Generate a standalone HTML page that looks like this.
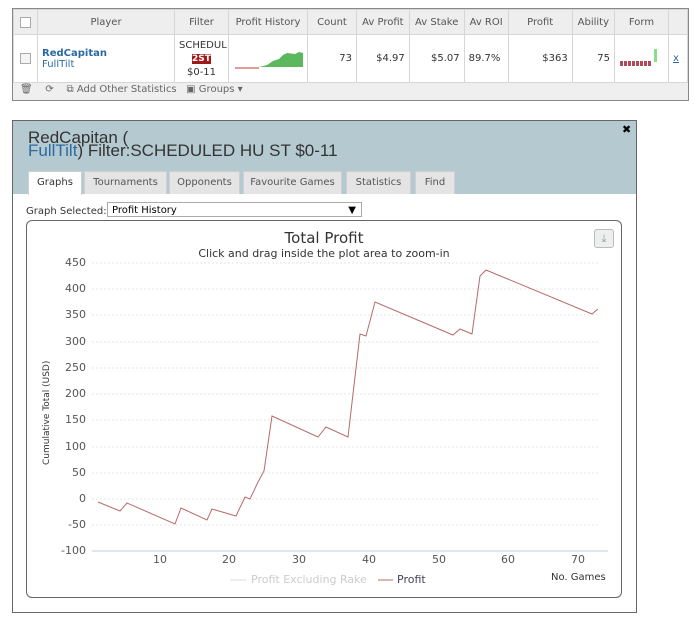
<!DOCTYPE html>
<html><head><style>
body{margin:0;width:700px;height:630px;background:#fff;font-family:"DejaVu Sans","Liberation Sans",sans-serif;position:relative;overflow:hidden}
.a{position:absolute}
table{border-collapse:collapse;font-size:10px;color:#333}
td{border:1px solid #d6d6d6;padding:0 4px;height:100%}
.h td{background:#eeeeee;text-align:center;color:#555}
.tab{position:absolute;top:171px;height:22px;background:#e4e4e4;border:1px solid #cfcfcf;border-bottom:none;font-size:10px;color:#555;line-height:22px;text-align:center}
.yl{position:absolute;font-size:11px;color:#555;text-align:right;width:40px;left:46px}
.xl{position:absolute;font-size:11px;color:#555;top:553px}
</style></head><body>
<div class="a" style="left:12px;top:8px;width:677px;height:93px;border:1px solid #888;box-sizing:border-box;background:#efefef"></div>
<table class="a" style="left:13px;top:9px;width:675px">
<tr class="h" style="height:25px"><td style="width:15px"><div style="width:9px;height:9px;border:1px solid #aaa;background:#fff;margin:auto"></div></td><td style="width:128px">Player</td><td style="width:45px">Filter</td><td style="width:70px">Profit History</td><td style="width:40px">Count</td><td>Av Profit</td><td>Av Stake</td><td>Av ROI</td><td style="width:55px">Profit</td><td>Ability</td><td style="width:45px">Form</td><td style="width:10px"></td></tr>
<tr style="height:44px;background:#fff"><td><div style="width:9px;height:9px;border:1px solid #aaa;background:#f4f4f4;margin:auto"></div></td><td><b style="color:#2a6aa3">RedCapitan</b><br><span style="color:#2a6aa3">FullTilt</span></td><td style="text-align:center;white-space:nowrap;overflow:hidden;max-width:45px;line-height:13px">SCHEDUL<br><span style="background:#a01818;color:#fff;font-weight:bold;font-size:9px">2ST</span><br>$0-11</td><td style="padding:0"><svg width="78" height="44"><path d="M30 32 L38 30 L44 26 L50 24 L54 20 L58 18 L66 19 L70 17 L74 18 L74 32 Z" fill="#5cb85c"/><path d="M6 33 L30 33" stroke="#c33" stroke-width="1"/></svg></td><td style="text-align:right">73</td><td style="text-align:right">$4.97</td><td style="text-align:right">$5.07</td><td>89.7%</td><td style="text-align:right">$363</td><td style="text-align:right">75</td><td style="padding:0"><svg width="52" height="44"><g fill="#b04a5a"><rect x="5" y="26" width="3" height="5"/><rect x="9" y="26" width="3" height="5"/><rect x="13" y="26" width="3" height="5"/><rect x="17" y="26" width="3" height="5"/><rect x="21" y="26" width="3" height="5"/><rect x="25" y="26" width="3" height="5"/><rect x="29" y="26" width="3" height="5"/><rect x="33" y="26" width="3" height="5"/></g><rect x="39" y="14" width="3" height="13" fill="#8cdc8c"/></svg></td><td style="color:#2a6aa3;text-decoration:underline">x</td></tr>
</table>
<div class="a" style="left:20px;top:84px;font-size:10px;color:#666">&#x1F5D1;&#xFE0E;&nbsp;&nbsp;&nbsp; ⟳ &nbsp;&nbsp; ⧉ Add Other Statistics &nbsp;&nbsp;▣ Groups ▾</div>

<div class="a" style="left:12px;top:120px;width:625px;height:493px;border:1px solid #666;box-sizing:border-box;background:#fff"></div>
<div class="a" style="left:13px;top:121px;width:623px;height:73px;background:#b5c9d0"></div>
<div class="a" style="left:28px;top:131px;font-family:'Liberation Sans',sans-serif;font-size:17px;line-height:13px;color:#333">RedCapitan (<br><span style="color:#2a6aa3">FullTilt</span>) Filter:SCHEDULED HU ST $0-11</div>
<div class="a" style="left:622px;top:123px;font-size:11px;font-weight:bold">✖</div>
<div class="tab" style="left:28px;width:52px;background:#fff;color:#333;height:23px">Graphs</div>
<div class="tab" style="left:84px;width:81px">Tournaments</div>
<div class="tab" style="left:169px;width:69px">Opponents</div>
<div class="tab" style="left:243px;width:97px">Favourite Games</div>
<div class="tab" style="left:346px;width:63px">Statistics</div>
<div class="tab" style="left:415px;width:38px">Find</div>
<div class="a" style="left:26px;top:206px;font-size:10px;color:#333">Graph Selected:</div>
<div class="a" style="left:107px;top:202px;width:255px;height:15px;border:1px solid #aaa;font-size:10px;line-height:15px;padding-left:4px;box-sizing:border-box">Profit History<span style="position:absolute;right:5px">▼</span></div>
<div class="a" style="left:26px;top:220px;width:596px;height:378px;border:1px solid #666;border-radius:6px;box-sizing:border-box"></div>
<div class="a" style="left:594px;top:229px;width:18px;height:17px;border:1px solid #bbb;border-radius:3px;background:#eee;font-size:11px;color:#8a8;text-align:center;line-height:17px">⤓</div>
<div class="a" style="left:0;width:648px;top:229px;text-align:center;font-size:15px;color:#333">Total Profit</div>
<div class="a" style="left:0;width:648px;top:247px;text-align:center;font-size:11px;color:#333">Click and drag inside the plot area to zoom-in</div>
<svg class="a" style="left:0;top:0" width="700" height="630">
<g stroke="#e4e4e4" stroke-dasharray="2,2">
<line x1="92" x2="600" y1="263" y2="263"/><line x1="92" x2="600" y1="289" y2="289"/><line x1="92" x2="600" y1="315" y2="315"/><line x1="92" x2="600" y1="342" y2="342"/><line x1="92" x2="600" y1="368" y2="368"/><line x1="92" x2="600" y1="394" y2="394"/><line x1="92" x2="600" y1="420" y2="420"/><line x1="92" x2="600" y1="447" y2="447"/><line x1="92" x2="600" y1="473" y2="473"/><line x1="92" x2="600" y1="499" y2="499"/><line x1="92" x2="600" y1="525" y2="525"/></g>
<line x1="92" x2="608" y1="551" y2="551" stroke="#c0ccd8"/>
<polyline fill="none" stroke="#b86a6a" stroke-width="1" points="98,502 120,511 127,503 175,524 181,508 207,520 212,509 236,516 245,497 250,499 258,482 264,471 272,416 318,437 326,427 348,437 360,334 366,336 375,302 453,335 460,329 472,334 480,276 486,270 592,314 598,309"/>
<line x1="230" x2="246" y1="580" y2="580" stroke="#ddd"/><line x1="378" x2="393" y1="580" y2="580" stroke="#b86a6a"/>
<text x="49" y="465" transform="rotate(-90 49 465)" font-size="9" fill="#333" font-family="DejaVu Sans">Cumulative Total (USD)</text>
</svg>
<div class="yl" style="top:256px">450</div><div class="yl" style="top:282px">400</div><div class="yl" style="top:308px">350</div><div class="yl" style="top:335px">300</div><div class="yl" style="top:361px">250</div><div class="yl" style="top:387px">200</div><div class="yl" style="top:413px">150</div><div class="yl" style="top:440px">100</div><div class="yl" style="top:466px">50</div><div class="yl" style="top:492px">0</div><div class="yl" style="top:518px">-50</div><div class="yl" style="top:544px">-100</div>
<div class="xl" style="left:153px">10</div><div class="xl" style="left:222px">20</div><div class="xl" style="left:292px">30</div><div class="xl" style="left:362px">40</div><div class="xl" style="left:432px">50</div><div class="xl" style="left:501px">60</div><div class="xl" style="left:571px">70</div>
<div class="a" style="left:251px;top:573px;font-size:11px;color:#ccc">Profit Excluding Rake</div>
<div class="a" style="left:397px;top:573px;font-size:11px;color:#445">Profit</div>
<div class="a" style="left:551px;top:572px;font-size:10px;color:#333">No. Games</div>
</body></html>
